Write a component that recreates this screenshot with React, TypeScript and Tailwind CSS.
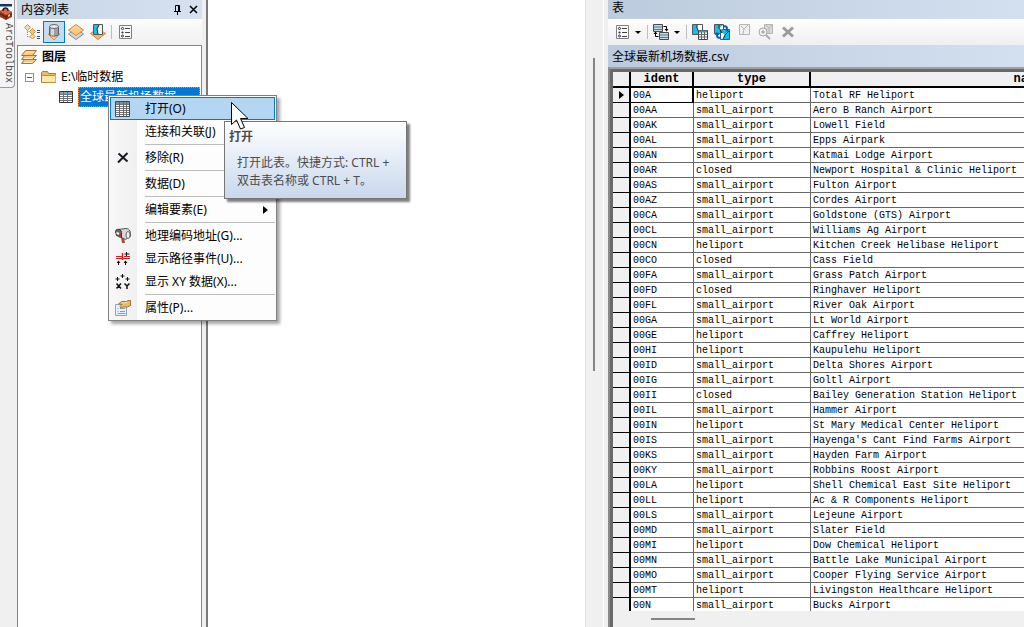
import type { ReactNode } from "react"

type Airport = [ident: string, type: string, name: string]

const airports: Airport[] = [
   ["00A", "heliport", "Total RF Heliport"],
   ["00AA", "small_airport", "Aero B Ranch Airport"],
   ["00AK", "small_airport", "Lowell Field"],
   ["00AL", "small_airport", "Epps Airpark"],
   ["00AN", "small_airport", "Katmai Lodge Airport"],
   ["00AR", "closed", "Newport Hospital & Clinic Heliport"],
   ["00AS", "small_airport", "Fulton Airport"],
   ["00AZ", "small_airport", "Cordes Airport"],
   ["00CA", "small_airport", "Goldstone (GTS) Airport"],
   ["00CL", "small_airport", "Williams Ag Airport"],
   ["00CN", "heliport", "Kitchen Creek Helibase Heliport"],
   ["00CO", "closed", "Cass Field"],
   ["00FA", "small_airport", "Grass Patch Airport"],
   ["00FD", "closed", "Ringhaver Heliport"],
   ["00FL", "small_airport", "River Oak Airport"],
   ["00GA", "small_airport", "Lt World Airport"],
   ["00GE", "heliport", "Caffrey Heliport"],
   ["00HI", "heliport", "Kaupulehu Heliport"],
   ["00ID", "small_airport", "Delta Shores Airport"],
   ["00IG", "small_airport", "Goltl Airport"],
   ["00II", "closed", "Bailey Generation Station Heliport"],
   ["00IL", "small_airport", "Hammer Airport"],
   ["00IN", "heliport", "St Mary Medical Center Heliport"],
   ["00IS", "small_airport", "Hayenga's Cant Find Farms Airport"],
   ["00KS", "small_airport", "Hayden Farm Airport"],
   ["00KY", "small_airport", "Robbins Roost Airport"],
   ["00LA", "heliport", "Shell Chemical East Site Heliport"],
   ["00LL", "heliport", "Ac & R Components Heliport"],
   ["00LS", "small_airport", "Lejeune Airport"],
   ["00MD", "small_airport", "Slater Field"],
   ["00MI", "heliport", "Dow Chemical Heliport"],
   ["00MN", "small_airport", "Battle Lake Municipal Airport"],
   ["00MO", "small_airport", "Cooper Flying Service Airport"],
   ["00MT", "heliport", "Livingston Healthcare Heliport"],
   ["00N", "small_airport", "Bucks Airport"],
]

const Icon = ({ children }: { children: ReactNode }) => (
   <svg width="16" height="16" viewBox="0 0 16 16" fill="none" className="shrink-0">
      {children}
   </svg>
)

const ToolboxIcon = () => (
   <svg width="13" height="17" viewBox="0 0 13 17" className="shrink-0">
      <path d="M0 0h13v17H0z" fill="#fff" />
      <path d="M0 0h12v2H0z" fill="#16365f" />
      <path d="M0 2h12v1H0z" fill="#7f9dc0" />
      <path d="M0 7l5-3 7 4v5l-6 3-6-3z" fill="#9c3522" />
      <path d="M0 7l5-3 7 4-6 3z" fill="#d9694a" />
      <path d="M3 7c0-4 5-4 5 0" stroke="#3f1710" strokeWidth="1.500" fill="none" />
      <path d="M6 11v5M0 10l6 3 6-3" stroke="#5c1c12" fill="none" />
      <path d="M8 11l2-1v2l-2 1z" fill="#f0c060" />
   </svg>
)

const ListIcon = () => (
   <Icon>
      <path d="M2.500 1.500h12v13h-12z" fill="#fafafa" stroke="#808080" />
      <circle cx="5.500" cy="4.500" r="1.100" stroke="#333" />
      <circle cx="5.500" cy="8.500" r="1.100" fill="#333" />
      <circle cx="5.500" cy="12" r="1" stroke="#333" />
      <path d="M8 4.500h5M8 8.500h5M8 12.500h5" stroke="#444" />
   </Icon>
)

const DrawOrderIcon = () => (
   <Icon>
      <path d="M3.500 6v7h3M3.500 7.500h4" stroke="#8a8a8a" strokeDasharray="1 1" />
      <path d="M3.500.5l3 3-3 3-3-3z" fill="#f6d9a4" stroke="#c99547" />
      <path d="M8.500 4.500l3 3-3 3-3-3z" fill="#f2c67a" stroke="#c99547" />
      <path d="M8.500 10l2.500 2.500L8.500 15 6 12.500z" fill="#f6d9a4" stroke="#c99547" />
      <path d="M13 6.500h3M13 8.500h3M13 12.500h3M13 14.500h3" stroke="#3c4f68" />
   </Icon>
)

const SourceIcon = () => (
   <Icon>
      <path d="M2 10h12l-6 6z" fill="#f6c983" stroke="#d69440" />
      <path d="M3.500 2.500v8c0 2 9 2 9 0v-8z" fill="#9aa0a8" stroke="#5c6169" />
      <path d="M5 3v8.500h3V3z" fill="#d5d9de" />
      <ellipse cx="8" cy="2.500" rx="4.500" ry="2" fill="#e3e6ea" stroke="#666b73" />
   </Icon>
)

const VisibilityIcon = () => (
   <Icon>
      <path d="M.5 10l7.500 5.500 7.500-5.500L8 4.500z" fill="#d4d4d4" stroke="#8d8d8d" />
      <path d="M.5 6l7.500 5.500L15.500 6 8 .5z" fill="#f6cb85" stroke="#d38a38" />
      <path d="M3 6l5-4 4 3" stroke="#fbe5bd" />
   </Icon>
)

const SelectionIcon = () => (
   <Icon>
      <path d="M.5 9.500L8 15.500l7.500-6-3-2h-9z" fill="#f3ba6a" stroke="#cf8433" />
      <path d="M3.500.5h9v10h-9z" fill="#f2f4f5" stroke="#555" />
      <path d="M4 1h5L7 5l1 5H4z" fill="#17c0ea" />
      <path d="M9 1L7 5l1 5" stroke="#222" />
   </Icon>
)

const LayersIcon = () => (
   <svg width="17" height="14" viewBox="0 0 17 14" className="shrink-0">
      <g fill="#f4c981" stroke="#b8702c">
         <path d="M.5 13.500l3-4h12l-4 4z" />
         <path d="M.5 9.500l3-4h12l-4 4z" />
         <path d="M.5 5.500l4-5h11l-4 5z" />
      </g>
      <path d="M4 4l2-2h7M3 8.500h8M3 12.500h8" stroke="#fdebc8" fill="none" />
   </svg>
)

const FolderIcon = () => (
   <Icon>
      <path d="M.5 13.500v-10l1-1h5l1 2h7v9z" fill="#e8bd62" stroke="#a98234" />
      <path d="M1 6h13.500v7.500H1z" fill="#fbe7a8" />
      <path d="M1 6.500h13M.5 13.500h14" stroke="#b6923f" />
   </Icon>
)

const TableIcon = () => (
   <Icon>
      <path d="M1.500 2.500h13v11h-13z" fill="#fff" stroke="#333" />
      <path d="M2 3h12v2H2z" fill="#7aa5bb" />
      <path d="M2 5.500h12M2 7.500h12M2 9.500h12M2 11.500h12" stroke="#6d7379" />
      <path d="M5.500 3v10M9.500 3v10" stroke="#6d7379" />
   </Icon>
)

// larger grid glyph used by the menu
const OpenTableIcon = () => (
   <Icon>
      <path d="M.5.5h14v15H.5z" fill="#fff" stroke="#4a4a4a" />
      <path d="M1 1h13v2H1z" fill="#7b8f9c" />
      <path d="M1 3.500h13M1 5.500h13M1 7.500h13M1 9.500h13M1 11.500h13M1 13.500h13" stroke="#777" />
      <path d="M4.500 1v14M8.500 1v14M11.500 1v14" stroke="#666" />
   </Icon>
)

const RelatedIcon = () => (
   <Icon>
      <path d="M.5.5h9v7h-9zM6.500 8.500h9v7h-9z" fill="#c4dbe5" stroke="#4a4a4a" />
      <path d="M1 3h8M1 5.500h8M7 11h8M7 13.500h8" stroke="#54798c" />
      <path d="M10.500 2.500h3v4M5.500 12.500h-3v-4" stroke="#000" />
      <path d="M11.500 5h4l-2 2.500zM.5 10h4l-2-2.500z" fill="#000" />
   </Icon>
)

const SelectAttributesIcon = () => (
   <Icon>
      <path d="M.5.5h10v10H.5z" fill="#fff" stroke="#555" />
      <path d="M1 1h4L5 4l3 6H1z" fill="#12bfe8" />
      <path d="M5 1v3l3 6" stroke="#222" />
      <path d="M6.500 6.500h9v9h-9z" fill="#fff" stroke="#444" />
      <path d="M7 7.500h8" stroke="#5892ad" strokeWidth="2" />
      <path d="M7 10.500h8M7 13h8M9.500 8v7M12.500 8v7" stroke="#666" />
   </Icon>
)

const SwitchSelectionIcon = () => (
   <Icon>
      <path d="M.5.5h9v9h-9z" fill="#12bfe8" stroke="#555" />
      <path d="M6.500 5.500h9v10h-9z" fill="#12bfe8" stroke="#555" />
      <path d="M5 1v3l4-3v4l-4 1zM7 8l4 3-2 4H7z" fill="#fff" />
      <path d="M5 1v3l3 5M11 11l-2 4M11 11l4-4" stroke="#222" />
      <path d="M9 2.500c4-1 4 1 4 3M7 13.500c-4 1-4-1-4-3" stroke="#0a5cae" strokeWidth="2" />
      <path d="M10.500 5h5L13 8zM.5 11h5L3 8z" fill="#0a5cae" />
   </Icon>
)

const ClearSelectionIcon = () => (
   <Icon>
      <path d="M3.500.5h10v10h-10z" fill="#f0f0f0" stroke="#b5b5b5" />
      <path d="M5 2l3 3 4-4M8 5l-1 5" stroke="#b5b5b5" />
   </Icon>
)

const ZoomSelectedIcon = () => (
   <Icon>
      <path d="M6.500.5h8v9h-8z" fill="#d8d8d8" stroke="#b5b5b5" />
      <path d="M8 1l3 3 3-3M11 4v5" stroke="#bbb" />
      <circle cx="5" cy="8" r="4" fill="#f4f4f4" stroke="#a5a5a5" />
      <path d="M3 8h4M5 6v4" stroke="#999" />
      <path d="M8 11l4 4" stroke="#aaa" strokeWidth="2" />
   </Icon>
)

const DeleteIcon = () => (
   <Icon>
      <path d="M3 3.500l10 9M13 3.500l-10 9" stroke="#9b9b9b" strokeWidth="3" />
   </Icon>
)

const RemoveIcon = () => (
   <Icon>
      <path d="M3.500 3.500l9 8M12.500 3L3 12.500" stroke="#1a1a22" strokeWidth="2" />
   </Icon>
)

const MailboxIcon = () => (
   <Icon>
      <path d="M6 9h3l1 6H7z" fill="#a0522d" />
      <path d="M3 1.500l8-1c4 0 5 4 4.500 8l-5 3-4-2z" fill="#d6d6d6" stroke="#555" />
      <path d="M.5 3.500c0-3 6-3 6 1v5l-5-2z" fill="#6a6a6a" stroke="#333" />
      <ellipse cx="13" cy="7" rx="2" ry="3.500" fill="#f4f4f4" stroke="#666" />
      <path d="M1.500 4l3 1v2l-3-1z" fill="#fff" />
      <path d="M4 5.500h2v4H4z" fill="#d62a2a" />
   </Icon>
)

const RouteEventIcon = () => (
   <Icon>
      <path d="M1 5.500h6M1 7.500h14M9 5.500h6" stroke="#e31b1b" />
      <path d="M7.500 2v7" stroke="#e31b1b" strokeWidth="1.500" />
      <path d="M11.500 1v4M9.500 3h5M3.500 10v4M10.500 10v4" stroke="#111" />
      <path d="M1.500 12l2-2.500 2 2.500zM8.500 12l2-2.500 2 2.500z" fill="#111" />
   </Icon>
)

const XyIcon = () => (
   <Icon>
      <path d="M2.500 3v4M.5 5h4M7.500 0v4M5.500 2h4M12.500 3v4M10.500 5h4" stroke="#111" />
      <path d="M1.500 9.500l4.500 5M6 9.500l-4.500 5M9.500 9.500L12 12l2.500-2.500M12 12v3" stroke="#111" strokeWidth="1.500" />
   </Icon>
)

const PropertiesIcon = () => (
   <Icon>
      <path d="M.5 4.500h11v11H.5z" fill="#e9f2fc" stroke="#8ba4c2" />
      <path d="M2.500 8.500h1M2.500 11.500h1M5 8.500h5M5 11.500h5M2.500 13.500h8" stroke="#7ba1cb" />
      <path d="M3.500 4l3-2.500h5L13 .5h2.500v5l-3 1.500H8L6 8 5 6.500l2-2z" fill="#efb766" stroke="#a57434" />
      <path d="M7 3l5-.5" stroke="#fce0ae" />
   </Icon>
)

const PinIcon = () => (
   <svg width="9" height="10" viewBox="0 0 9 10" fill="none" stroke="#000">
      <path d="M2.500 6V.5h4V6M5.500 1v5M1 6.500h7M4.500 7v3" />
   </svg>
)

const CloseIcon = () => (
   <svg width="9" height="9" viewBox="0 0 9 9" fill="none" stroke="#000">
      <path d="M1 1l7 7M8 1L1 8" strokeWidth="1.500" />
   </svg>
)

const CaretIcon = () => (
   <svg width="6" height="3" viewBox="0 0 6 3">
      <path d="M0 0h6L3 3z" fill="#000" />
   </svg>
)

type MenuEntry = {
   label: string
   icon?: ReactNode
   divider?: boolean
   active?: boolean
   submenu?: boolean
}

const menu: MenuEntry[] = [
   { label: "打开(O)", icon: <OpenTableIcon />, active: true },
   { label: "连接和关联(J)", divider: true },
   { label: "移除(R)", icon: <RemoveIcon />, divider: true },
   { label: "数据(D)", divider: true },
   { label: "编辑要素(E)", divider: true, submenu: true },
   { label: "地理编码地址(G)...", icon: <MailboxIcon /> },
   { label: "显示路径事件(U)...", icon: <RouteEventIcon /> },
   { label: "显示 XY 数据(X)...", icon: <XyIcon />, divider: true },
   { label: "属性(P)...", icon: <PropertiesIcon /> },
]

const ToolButton = ({ label, active, children }: { label: string; active?: boolean; children: ReactNode }) => (
   <button
      aria-label={label}
      className={
         active
            ? "flex h-[22px] w-[22px] items-center justify-center border border-[#0078d7] bg-[#c3dcf2]"
            : "flex h-[22px] w-[22px] items-center justify-center"
      }
   >
      {children}
   </button>
)

const ContentsPanel = () => (
   <aside className="flex w-[185px] shrink-0 flex-col">
      <header className="flex h-[19px] items-center bg-linear-to-r from-[#c7d5e4] to-[#d6e1f0] pr-1 pl-1">
         <h2 className="flex-1 leading-4">内容列表</h2>
         <button aria-label="自动隐藏" className="mr-[7px]">
            <PinIcon />
         </button>
         <button aria-label="关闭">
            <CloseIcon />
         </button>
      </header>
      <div className="flex h-[26px] items-center bg-linear-to-b from-[#fcfcfc] to-[#f0f0f0] pl-1">
         <ToolButton label="按绘制顺序列出">
            <DrawOrderIcon />
         </ToolButton>
         <ToolButton label="按源列出" active>
            <SourceIcon />
         </ToolButton>
         <ToolButton label="按可见性列出">
            <VisibilityIcon />
         </ToolButton>
         <ToolButton label="按选择列出">
            <SelectionIcon />
         </ToolButton>
         <span className="mx-[2px] h-[14px] w-px bg-[#bdbdbd]" />
         <ToolButton label="选项">
            <ListIcon />
         </ToolButton>
      </div>
      <ul className="flex-1 border border-b-0 border-[#82878f] bg-white pt-px">
         <li className="flex h-5 items-center gap-1 pl-[3px] font-bold">
            <LayersIcon />
            图层
         </li>
         <li className="flex h-5 items-center pl-[7px]">
            <button aria-label="折叠" className="mr-[7px] flex h-[9px] w-[9px] items-center justify-center border border-[#919191] bg-white">
               <span className="h-px w-[5px] bg-[#3b5fa8]" />
            </button>
            <FolderIcon />
            <span className="ml-1">E:\临时数据</span>
         </li>
         <li className="flex h-5 items-center pr-px pl-10">
            <TableIcon />
            <span className="ml-1 h-5 flex-1 overflow-hidden border border-dotted border-[#ff8728] bg-[#0078d7] pl-px leading-[18px] whitespace-nowrap text-white">
               全球最新机场数据
            </span>
         </li>
      </ul>
   </aside>
)

const ContextMenu = () => (
   <div className="absolute top-[95px] left-[108px] z-10 w-[169px] border border-[#808080] bg-[#fdfdfd] bg-linear-to-r from-[#f8f8f8] from-0% via-[#f0f0f0] via-[28px] to-[#fdfdfd] to-[28px] p-px shadow-[3px_3px_3px_rgba(0,0,0,0.35)]">
      {menu.map((item) => (
         <div key={item.label}>
            <button
               className={
                  item.active
                     ? "flex h-[23px] w-full items-center border border-[#0078d7] bg-[#b3d7f3] pl-1 text-left"
                     : "flex h-[23px] w-full items-center pl-[5px] text-left"
               }
            >
               <span className="mr-[14px] flex w-4">{item.icon}</span>
               <span className="flex-1">{item.label}</span>
               {item.submenu && (
                  <svg width="5" height="8" viewBox="0 0 5 8" className="mr-[7px]">
                     <path d="M0 0v8l5-4z" fill="#000" />
                  </svg>
               )}
            </button>
            {item.divider && <div className="my-px ml-[35px] h-px bg-[#bdbdbd]" />}
         </div>
      ))}
   </div>
)

const Tooltip = () => (
   <div
      role="tooltip"
      className="absolute top-[121px] left-[224px] z-20 h-[78px] w-[183px] border border-[#767676] bg-linear-to-b from-white to-[#c9d8ec] px-1 pt-1.5 text-[#4c4c4c] shadow-[3px_3px_2px_rgba(0,0,0,0.5)]"
   >
      <p className="leading-[18px] font-bold">打开</p>
      <p className="mt-2 pl-2 leading-[18px] whitespace-nowrap">
         打开此表。快捷方式: CTRL +
         <br />
         双击表名称或 CTRL + T。
      </p>
   </div>
)

const Cursor = () => (
   <svg width="19" height="29" viewBox="0 0 19 29" className="absolute top-[102px] left-[231px] z-30">
      <path d="M.5.5v22l5-4.500 4 9 4-1.500-4-9h7.500z" fill="#fff" stroke="#000" />
   </svg>
)

const TablePanel = () => (
   <section className="flex w-[416px] shrink-0 flex-col">
      <header className="h-[19px] bg-linear-to-r from-[#bccbdd] to-[#d3e0f0] pl-1 leading-4">
         <h2>表</h2>
      </header>
      <div className="flex h-[26px] items-center gap-1 bg-linear-to-b from-[#fefefe] to-[#efefef] pl-1.5">
         <button aria-label="表选项">
            <ListIcon />
         </button>
         <button aria-label="表选项菜单" className="flex w-2 justify-center">
            <CaretIcon />
         </button>
         <span className="mx-px h-[14px] w-px bg-[#bdbdbd]" />
         <button aria-label="关联表">
            <RelatedIcon />
         </button>
         <button aria-label="关联表菜单" className="flex w-2 justify-center">
            <CaretIcon />
         </button>
         <span className="mx-px h-[14px] w-px bg-[#bdbdbd]" />
         <div className="flex gap-1.5">
            <button aria-label="按属性选择">
               <SelectAttributesIcon />
            </button>
            <button aria-label="切换选择">
               <SwitchSelectionIcon />
            </button>
            <button aria-label="清除所选内容">
               <ClearSelectionIcon />
            </button>
            <button aria-label="缩放至所选项">
               <ZoomSelectedIcon />
            </button>
            <button aria-label="删除所选项">
               <DeleteIcon />
            </button>
         </div>
      </div>
      <h3 className="h-[22px] bg-linear-to-r from-[#bccbdd] to-[#d3e0f0] pl-1 leading-[23px]">全球最新机场数据.csv</h3>
      <div className="flex min-h-0 flex-1 flex-col border-t-2 border-l-2 border-t-[#a0a0a0] border-l-[#8a8a8a]">
         <div className="flex min-h-0 flex-1 flex-col border-t-3 border-l-3 border-[#696969]">
            <div className="min-h-0 flex-1 overflow-hidden bg-white">
               <table className="w-[632px] table-fixed border-separate border-spacing-0 font-['Liberation_Mono',monospace] text-[10px] text-black">
                  <thead>
                     <tr className="h-4 bg-[#f0f0f0] text-[12px] leading-[13px]">
                        <th className="w-[18px] border-r-2 border-b-2 border-black p-0" />
                        <th className="w-[63px] border-r-2 border-b-2 border-black p-0 pt-px">ident</th>
                        <th className="w-[117px] border-r-2 border-b-2 border-black p-0 pt-px">type</th>
                        <th className="border-b-2 border-black p-0 pt-px">name</th>
                     </tr>
                  </thead>
                  <tbody>
                     {airports.map(([ident, type, name], index) => (
                        <tr key={ident} className="h-[15px] leading-[12px]">
                           <td className="border-r-2 border-b border-black bg-[#f0f0f0] p-0">
                              {index === 0 && (
                                 <svg width="5" height="8" viewBox="0 0 5 8" className="mx-auto">
                                    <path d="M0 0v8l5-4z" fill="#000" />
                                 </svg>
                              )}
                           </td>
                           <td
                              className={
                                 index === 0
                                    ? "border-r-2 border-b border-black p-0 pt-[2px] pl-[2px]"
                                    : "border-r border-b border-[#696969] p-0 pt-[2px] pl-[2px]"
                              }
                           >
                              {ident}
                           </td>
                           <td className="border-r border-b border-[#696969] p-0 pt-[2px] pl-[2px]">{type}</td>
                           <td className="border-b border-[#696969] p-0 pt-[2px] pl-[2px]">{name}</td>
                        </tr>
                     ))}
                  </tbody>
               </table>
            </div>
            <div className="h-4 shrink-0 pt-[7px] pl-[38px]">
               <div className="h-[2px] w-11 bg-[#858585]" />
            </div>
         </div>
      </div>
   </section>
)

const App = () => {
   return (
      <main className="relative flex h-screen overflow-hidden bg-[#f0f0f0] font-['Noto_Sans','Noto_Sans_CJK_SC',sans-serif] text-xs text-black">
         <div className="w-[17px] shrink-0">
            <button className="flex h-[88px] w-[15px] flex-col rounded-br border-r border-b border-[#9a9a9a] bg-[#f4f4f4] pt-1">
               <ToolboxIcon />
               <span className="mt-[2px] font-['Liberation_Mono',monospace] text-[10px] leading-3 text-[#444] [writing-mode:vertical-rl]">
                  ArcToolbox
               </span>
            </button>
         </div>
         <ContentsPanel />
         <div className="w-[6px] shrink-0 border-r-2 border-[#7a7a7a]" />
         <div className="min-w-0 flex-1 bg-white" />
         <div className="w-[23px] shrink-0 border-l border-[#e0e0e0]">
            <div className="h-full w-[18px] border-r border-white pt-[58px] pl-[7px]">
               <div className="h-[313px] w-[2px] bg-[#858585]" />
            </div>
         </div>
         <TablePanel />
         <ContextMenu />
         <Tooltip />
         <Cursor />
      </main>
   )
}

export default App
